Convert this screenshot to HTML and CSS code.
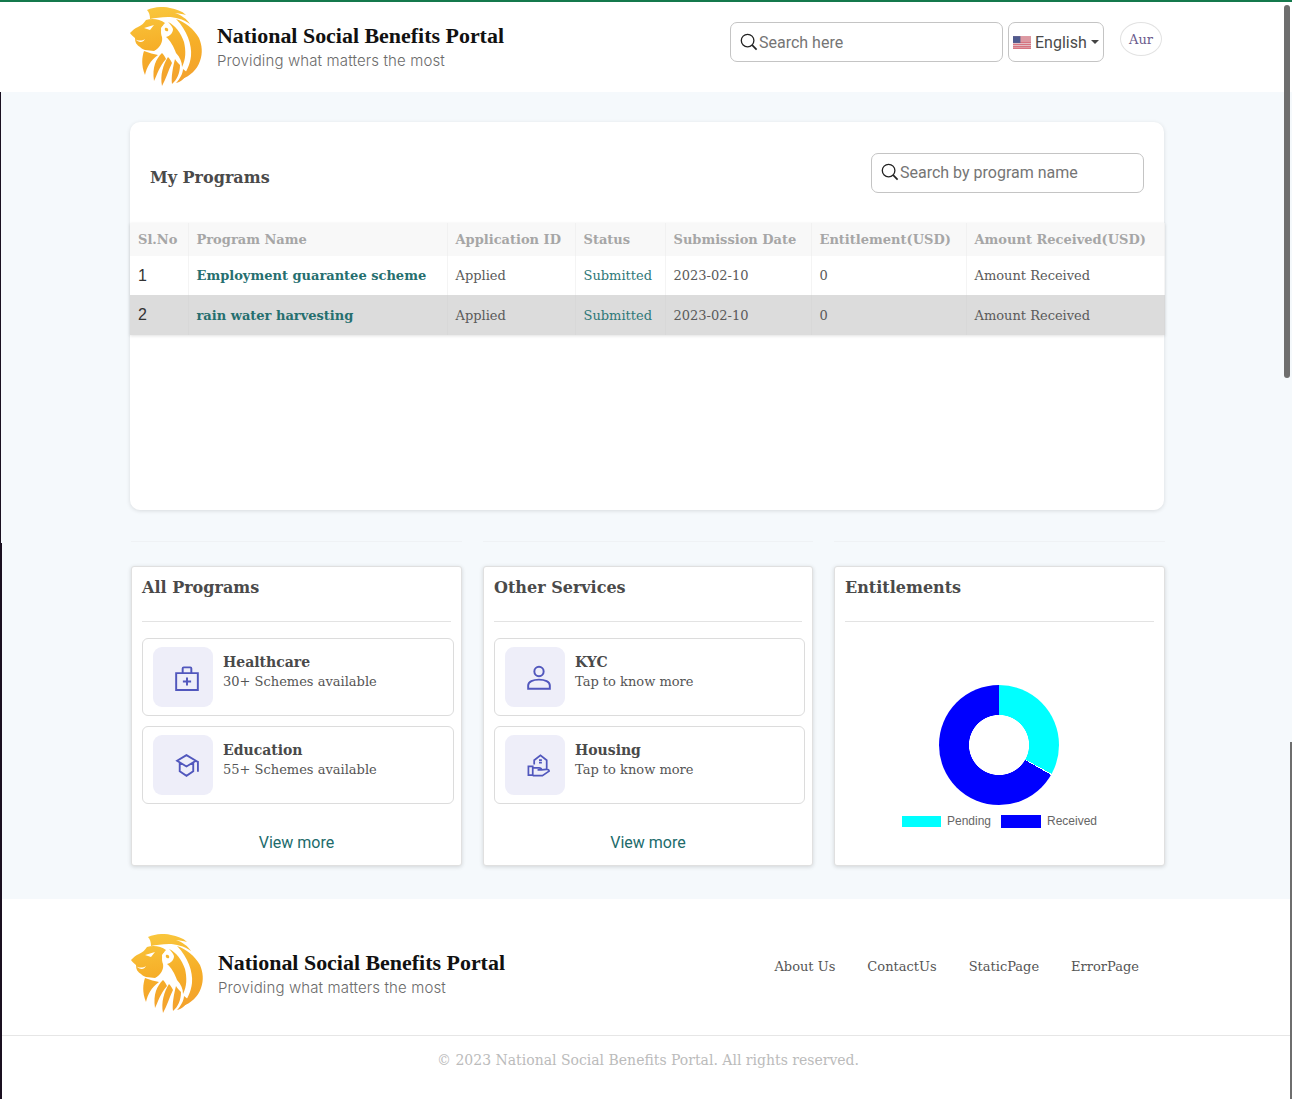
FILE: index.html
```html
<!DOCTYPE html>
<html lang="en">
<head>
<meta charset="utf-8">
<title>National Social Benefits Portal</title>
<link rel="stylesheet" href="styles.css">
</head>
<body>
<svg class="defs" width="0" height="0" aria-hidden="true">
  <defs>
    <linearGradient id="lionGrad" gradientUnits="userSpaceOnUse" x1="30" y1="0" x2="42" y2="80">
      <stop offset="0" stop-color="#f9c63c"/>
      <stop offset="0.5" stop-color="#f6ae28"/>
      <stop offset="1" stop-color="#f3a02e"/>
    </linearGradient>
    <symbol id="lion" viewBox="0 0 74 80">
      <g fill="url(#lionGrad)">
        <path d="M0 26C3 23 5 21 8 20 12 18 14 16 16 13 22 11 30 12 35 16 31 20 30 25 32 30 33 35 30 41 24 44L15 43C12 42 11 41 10 40 7 38 5 36 5 31 3 29 1 28 0 26Z"/>
        <path d="M17 3C24 0 33-1 40 1 46 2 52 4 56 8 52 7 48 6 45 6 51 8 57 12 60 17 53 12 45 10 38 10 31 10 25 11 20 12 20 8 19 5 17 3Z"/>
        <path d="M46 12C55 15 64 22 69 31 72 38 73 46 70 54 67 63 60 69 52 72 56 65 60 58 61 49 62 38 57 23 46 12Z"/>
        <path d="M38 15C45 18 51 26 54 35 56 44 56 52 52 60 52 55 50 50 46 46 44 40 40 33 36 30 40 29 43 26 43 22 42 19 40 17 38 15Z"/>
        <path d="M14 44C12 50 11 58 15 68 17 60 20 54 28 48 24 47 19 46 14 44Z"/>
        <path d="M32 46C26 52 22 60 24 74 27 68 29 60 36 52 35 50 34 48 32 46Z"/>
        <path d="M38 50C33 58 30 68 32 79 36 72 38 64 42 56 41 54 40 52 38 50Z"/>
        <path d="M45 52C43 60 41 70 42 77 47 73 50 66 50 58 48 56 46 54 45 52Z"/>
        <path d="M53 62C53 66 50 72 46 76 51 75 55 71 58 66Z"/>
      </g>
      <path fill="#fff" d="M31 21C33 17 39 17 41 21 42 25 40 28 37 28 33 28 31 25 31 21Z"/>
      <path fill="#f7b62f" d="M35 21C37 20 39 22 38 24 36 25 34 23 35 21Z"/>
      <path fill="#fff" d="M14 21 24 18 20 23ZM5 32C8 34 12 34 15 32 13 36 9 36 5 32Z"/>
    </symbol>
    <symbol id="search" viewBox="0 0 18 18">
      <circle cx="7.6" cy="7.6" r="6.3" fill="none" stroke="#222" stroke-width="1.3"/>
      <path d="M12.2 12.2 16.6 16.6" stroke="#222" stroke-width="1.7" fill="none"/>
    </symbol>
  </defs>
</svg>

<div class="page">
  <header class="topbar">
    <div class="brand">
      <svg class="lion" aria-hidden="true"><use href="#lion"/></svg>
      <div class="brand-text">
        <div class="brand-name">National Social Benefits Portal</div>
        <div class="brand-tag">Providing what matters the most</div>
      </div>
    </div>
    <div class="top-actions">
      <div class="search search-top">
        <svg class="search-icon" aria-hidden="true"><use href="#search"/></svg>
        <span>Search here</span>
      </div>
      <div class="lang">
        <svg class="flag" viewBox="0 0 17 12" aria-hidden="true">
          <rect width="17" height="12" fill="#e9e3e6"/>
          <path d="M0 .9h17M0 2.7h17M0 4.5h17M0 6.3h17M0 8.1h17M0 9.9h17M0 11.5h17" stroke="#d0505f" stroke-width=".95"/>
          <rect width="7" height="6.4" fill="#4f5a8e"/>
        </svg>
        <span>English</span>
        <i class="caret"></i>
      </div>
      <div class="avatar">Aur</div>
    </div>
  </header>

  <main class="content">
    <section class="programs">
      <div class="programs-head">
        <h2>My Programs</h2>
        <div class="search search-programs">
          <svg class="search-icon" aria-hidden="true"><use href="#search"/></svg>
          <span>Search by program name</span>
        </div>
      </div>
      <table>
        <thead>
          <tr>
            <th class="c1">Sl.No</th>
            <th class="c2">Program Name</th>
            <th class="c3">Application ID</th>
            <th class="c4">Status</th>
            <th class="c5">Submission Date</th>
            <th class="c6">Entitlement(USD)</th>
            <th class="c7">Amount Received(USD)</th>
          </tr>
        </thead>
        <tbody>
          <tr>
            <td class="num">1</td>
            <td class="pname">Employment guarantee scheme</td>
            <td>Applied</td>
            <td class="status">Submitted</td>
            <td>2023-02-10</td>
            <td>0</td>
            <td>Amount Received</td>
          </tr>
          <tr class="alt">
            <td class="num">2</td>
            <td class="pname">rain water harvesting</td>
            <td>Applied</td>
            <td class="status">Submitted</td>
            <td>2023-02-10</td>
            <td>0</td>
            <td>Amount Received</td>
          </tr>
        </tbody>
      </table>
    </section>

    <section class="panels">
      <div class="panel-col">
        <div class="rule"></div>
        <article class="panel">
          <h3>All Programs</h3>
          <div class="items">
            <div class="item">
              <div class="item-icon">
                <svg viewBox="0 0 24 24" aria-hidden="true"><path d="M2 7.500h20V23H2zM8 7.500V3.200q0-1 1-1h6q1 0 1 1v4.300M12 11.500v7.500M8.200 15.200h7.600"/></svg>
              </div>
              <div><h4>Healthcare</h4><p>30+ Schemes available</p></div>
            </div>
            <div class="item">
              <div class="item-icon">
                <svg viewBox="-1 0 25 25" aria-hidden="true"><path d="M11 2 2 7.500 11 13 20 7.500ZM4.500 9.500V17.500L11 22l6.500-4.500V9.500M20 7.500 22 8.500V18"/></svg>
              </div>
              <div><h4>Education</h4><p>55+ Schemes available</p></div>
            </div>
          </div>
          <a class="more">View more</a>
        </article>
      </div>
      <div class="panel-col">
        <div class="rule"></div>
        <article class="panel">
          <h3>Other Services</h3>
          <div class="items">
            <div class="item">
              <div class="item-icon">
                <svg viewBox="0 0 24 24" aria-hidden="true"><circle cx="12" cy="6" r="4.300"/><path d="M2 22V19C2 15.500 6.500 13.500 12 13.500S22 15.500 22 19V22Z"/></svg>
              </div>
              <div><h4>KYC</h4><p>Tap to know more</p></div>
            </div>
            <div class="item">
              <div class="item-icon">
                <svg viewBox="-1 -1 27 27" aria-hidden="true"><path d="M7.500 11V6.500L14 1.500l6.500 5V15M12.500 6.500h3M12.500 9h3M1.500 13h4.500v9H1.500zM6 14.500h6.500q2.500 0 2.500 2H11M15 16.500l5-.5q3-.2 3 1.800L16 22.500H6"/></svg>
              </div>
              <div><h4>Housing</h4><p>Tap to know more</p></div>
            </div>
          </div>
          <a class="more">View more</a>
        </article>
      </div>
      <div class="panel-col">
        <div class="rule"></div>
        <article class="panel">
          <h3>Entitlements</h3>
          <div class="chart">
            <div class="donut"></div>
            <div class="legend">
              <i class="swatch swatch-pending"></i><span>Pending</span>
              <i class="swatch swatch-received"></i><span>Received</span>
            </div>
          </div>
        </article>
      </div>
    </section>
  </main>

  <footer class="footer">
    <div class="footer-main">
      <div class="brand">
        <svg class="lion" aria-hidden="true"><use href="#lion"/></svg>
        <div class="brand-text">
          <div class="brand-name">National Social Benefits Portal</div>
          <div class="brand-tag">Providing what matters the most</div>
        </div>
      </div>
      <nav class="footer-links">
        <a>About Us</a><a>ContactUs</a><a>StaticPage</a><a>ErrorPage</a>
      </nav>
    </div>
    <div class="copyright">© 2023 National Social Benefits Portal. All rights reserved.</div>
  </footer>
</div>

<div class="scrollbar"></div>
<div class="edge-left-top"></div>
<div class="edge-left"></div>
<div class="edge-right"></div>
</body>
</html>
```

FILE: styles.css
```css
* { box-sizing: border-box; }
html, body { margin: 0; padding: 0; }
body { background: #fff; font-family: "DejaVu Serif", serif; color: #4a4a4a; height: 1099px; overflow: hidden; }
.defs { position: absolute; }
.page { width: 1292px; border-top: 2px solid #14794c; }

.topbar { height: 90px; background: #fff; padding: 0 130px; display: flex; justify-content: space-between; }
.brand { display: flex; align-items: center; gap: 13px; }
.lion { width: 74px; height: 80px; display: block; }
.brand-name { font-family: "Liberation Serif", serif; font-weight: 700; font-size: 21.950px; line-height: 26px; color: #111; margin-top: -1px; }
.brand-tag { font-family: Inter, sans-serif; font-weight: 300; font-size: 15px; line-height: 20px; color: #6b6b6b; letter-spacing: .13px; margin-top: 2px; }
.top-actions { display: flex; align-items: flex-start; padding-top: 20px; width: 432px; }

.search { display: flex; align-items: center; gap: 1px; border: 1px solid #c4c4c4; border-radius: 7px; background: #fff; height: 40px; padding-left: 9px; font-family: Roboto, sans-serif; font-size: 16px; color: #757575; }
.search-top { width: 273px; }
.search-icon { width: 18px; height: 18px; flex: none; }
.lang { display: flex; align-items: center; margin-left: 5px; width: 96px; height: 40px; border: 1px solid #c4c4c4; border-radius: 7px; padding-left: 4px; font-family: Roboto, sans-serif; font-size: 16px; color: #4a4a4a; }
.flag { width: 18px; height: 13px; margin-right: 4px; flex: none; }
.caret { width: 0; height: 0; margin-left: 4px; border-left: 4px solid transparent; border-right: 4px solid transparent; border-top: 4px solid #444; }
.avatar { margin-left: 16px; width: 42px; height: 34px; border: 1px solid #e2e2e2; border-radius: 50%; display: flex; align-items: center; justify-content: center; font-size: 13px; color: #6a5a8c; }

.content { background: #f5f9fc; padding: 30px 127px 33px 130px; height: 807px; }
.programs { width: 1034px; height: 388px; background: #fff; border-radius: 10px; box-shadow: 0 1px 4px rgba(0,0,0,.12); padding-top: 31px; }
.programs-head { display: flex; align-items: center; justify-content: space-between; padding: 0 20px; height: 40px; margin-bottom: 30px; }
.programs-head h2 { margin: 8px 0 0; font-size: 16px; font-weight: 700; color: #4a4a4a; }
.search-programs { width: 273px; padding-bottom: 2px; }

table { width: 1034px; border-collapse: collapse; table-layout: fixed; font-size: 13px; box-shadow: 0 1px 3px rgba(0,0,0,.12); }
th { height: 33px; background: #f8f8f8; color: #a6a6a6; font-size: 13px; font-weight: 700; text-align: left; padding: 0 0 0 8px; border-right: 1px solid #f1f1f1; white-space: nowrap; }
td { height: 39px; padding: 0 0 0 8px; color: #5a5a5a; white-space: nowrap; border-right: 1px solid #f4f4f4; }
tbody tr:nth-child(2) td { height: 40px; }
.c1 { width: 58px; } .c2 { width: 259px; } .c3 { width: 128px; } .c4 { width: 90px; } .c5 { width: 146px; } .c6 { width: 155px; } .c7 { width: 198px; }
td.num { font-family: "Liberation Sans", sans-serif; font-size: 16px; color: #333; }
td.pname { font-weight: 700; color: #266f6f; }
td.status { color: #2f7878; }
.alt td { background: #dcdcdc; border-right-color: #d8d8d8; }

.panels { display: grid; grid-template-columns: 331px 330px 331px; column-gap: 21px; width: 1034px; margin: 31px 0 0 1px; }
.rule { height: 1px; background: #eff2f5; margin-bottom: 24px; }
.panel { height: 300px; background: #fff; border: 1px solid #e0e0e0; border-radius: 3px; box-shadow: 0 1px 4px rgba(0,0,0,.15); padding: 10px 7px 0 10px; }
.panel h3 { margin: 0 3px 0 0; height: 45px; border-bottom: 1px solid #e3e3e3; font-size: 16px; line-height: 21px; font-weight: 700; color: #4a4a4a; }
.items { margin-top: 16px; display: flex; flex-direction: column; gap: 10px; }
.item { height: 78px; border: 1px solid #dcdcdc; border-radius: 6px; padding: 8px 10px; display: flex; gap: 10px; }
.item-icon { width: 60px; height: 60px; background: #eeeef9; border-radius: 9px; display: flex; align-items: center; justify-content: center; flex: none; }
.item-icon svg { width: 26px; height: 26px; margin: 2px 0 0 8px; fill: none; stroke: #5157bd; stroke-width: 1.800; }
.item h4 { margin: 6px 0 0; font-size: 14px; line-height: 18px; font-weight: 700; color: #4a4a4a; }
.item p { margin: 3px 0 0; font-size: 13px; line-height: 16px; color: #555; }
.more { display: block; margin: 29px 3px 0 0; text-align: center; font-family: Roboto, sans-serif; font-size: 16px; line-height: 20px; color: #216b6b; }

.chart { display: flex; flex-direction: column; align-items: center; padding-top: 63px; margin-right: 5px; }
.donut { width: 120px; height: 120px; border-radius: 50%; background: radial-gradient(circle closest-side, #fff 49.500%, transparent 50.500%), conic-gradient(#0ff 0 33%, #fff 33% 33.300%, #00f 33.300% 100%); }
.legend { display: flex; align-items: center; margin: 9px 0 0 2px; font-family: "Liberation Sans", sans-serif; font-size: 12px; color: #666; }
.swatch { display: block; width: 39px; height: 11px; margin-right: 6px; }
.swatch-received { width: 40px; height: 13px; margin-left: 10px; }
.swatch-pending { background: #0ff; }
.swatch-received { background: #00f; }

.footer { background: #fff; height: 200px; }
.footer-main { height: 137px; padding: 14px 153px 0 131px; display: flex; justify-content: space-between; border-bottom: 1px solid #e6e6e6; }
.footer-main .brand { align-self: center; }
.footer-links { display: flex; gap: 32px; font-size: 13px; line-height: 16px; color: #555; margin-top: 46px; }
.copyright { text-align: center; padding: 14px 0 0 4px; font-size: 14px; line-height: 20px; color: #bbb; }

.scrollbar { position: absolute; left: 1284px; top: 5px; width: 6px; height: 373px; border-radius: 3px; background: #6e6e6e; }
.edge-left-top { position: absolute; left: 0; top: 92px; width: 1px; height: 451px; background: #1a1020; }
.edge-left { position: absolute; left: 0; top: 543px; width: 2px; height: 556px; background: #1a1020; }
.edge-right { position: absolute; left: 1290px; top: 742px; width: 2px; height: 357px; background: #6e6e6e; }
```
